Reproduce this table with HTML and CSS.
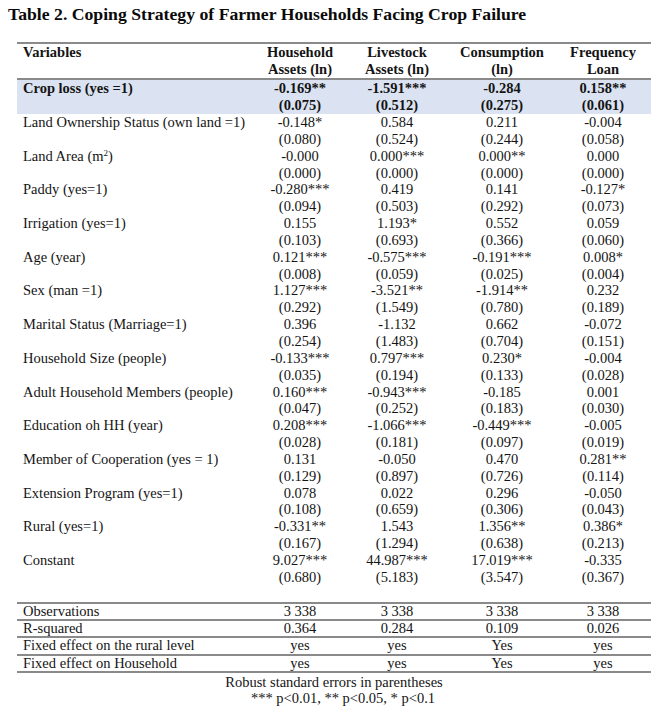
FILE: index.html
```html
<!DOCTYPE html>
<html>
<head>
<meta charset="utf-8">
<link rel="stylesheet" href="styles.css">
</head>
<body>
<div class="page">
  <h1 class="title">Table 2. Coping Strategy of Farmer Households Facing Crop Failure</h1>
  <table class="tbl">
    <colgroup>
      <col class="c0"><col class="c1"><col class="c2"><col class="c3"><col class="c4">
    </colgroup>
    <thead>
      <tr class="h1">
        <th class="var">Variables</th><th>Household</th><th>Livestock</th><th>Consumption</th><th>Frequency</th>
      </tr>
      <tr class="h2">
        <th class="var"></th><th>Assets (ln)</th><th>Assets (ln)</th><th>(ln)</th><th>Loan</th>
      </tr>
    </thead>
    <tbody>
      <tr class="hl"><td class="var">Crop loss (yes =1)</td><td>-0.169**</td><td>-1.591***</td><td>-0.284</td><td>0.158**</td></tr>
      <tr class="hl"><td class="var"></td><td>(0.075)</td><td>(0.512)</td><td>(0.275)</td><td>(0.061)</td></tr>

      <tr class="d"><td class="var">Land Ownership Status (own land =1)</td><td>-0.148*</td><td>0.584</td><td>0.211</td><td>-0.004</td></tr>
      <tr class="d"><td class="var"></td><td>(0.080)</td><td>(0.524)</td><td>(0.244)</td><td>(0.058)</td></tr>

      <tr class="d"><td class="var">Land Area (m<sup>2</sup>)</td><td>-0.000</td><td>0.000***</td><td>0.000**</td><td>0.000</td></tr>
      <tr class="d"><td class="var"></td><td>(0.000)</td><td>(0.000)</td><td>(0.000)</td><td>(0.000)</td></tr>

      <tr class="d"><td class="var">Paddy (yes=1)</td><td>-0.280***</td><td>0.419</td><td>0.141</td><td>-0.127*</td></tr>
      <tr class="d"><td class="var"></td><td>(0.094)</td><td>(0.503)</td><td>(0.292)</td><td>(0.073)</td></tr>

      <tr class="d"><td class="var">Irrigation (yes=1)</td><td>0.155</td><td>1.193*</td><td>0.552</td><td>0.059</td></tr>
      <tr class="d"><td class="var"></td><td>(0.103)</td><td>(0.693)</td><td>(0.366)</td><td>(0.060)</td></tr>

      <tr class="d"><td class="var">Age (year)</td><td>0.121***</td><td>-0.575***</td><td>-0.191***</td><td>0.008*</td></tr>
      <tr class="d"><td class="var"></td><td>(0.008)</td><td>(0.059)</td><td>(0.025)</td><td>(0.004)</td></tr>

      <tr class="d"><td class="var">Sex (man =1)</td><td>1.127***</td><td>-3.521**</td><td>-1.914**</td><td>0.232</td></tr>
      <tr class="d"><td class="var"></td><td>(0.292)</td><td>(1.549)</td><td>(0.780)</td><td>(0.189)</td></tr>

      <tr class="d"><td class="var">Marital Status (Marriage=1)</td><td>0.396</td><td>-1.132</td><td>0.662</td><td>-0.072</td></tr>
      <tr class="d"><td class="var"></td><td>(0.254)</td><td>(1.483)</td><td>(0.704)</td><td>(0.151)</td></tr>

      <tr class="d"><td class="var">Household Size (people)</td><td>-0.133***</td><td>0.797***</td><td>0.230*</td><td>-0.004</td></tr>
      <tr class="d"><td class="var"></td><td>(0.035)</td><td>(0.194)</td><td>(0.133)</td><td>(0.028)</td></tr>

      <tr class="d"><td class="var">Adult Household Members (people)</td><td>0.160***</td><td>-0.943***</td><td>-0.185</td><td>0.001</td></tr>
      <tr class="d"><td class="var"></td><td>(0.047)</td><td>(0.252)</td><td>(0.183)</td><td>(0.030)</td></tr>

      <tr class="d"><td class="var">Education oh HH (year)</td><td>0.208***</td><td>-1.066***</td><td>-0.449***</td><td>-0.005</td></tr>
      <tr class="d"><td class="var"></td><td>(0.028)</td><td>(0.181)</td><td>(0.097)</td><td>(0.019)</td></tr>

      <tr class="d"><td class="var">Member of Cooperation (yes = 1)</td><td>0.131</td><td>-0.050</td><td>0.470</td><td>0.281**</td></tr>
      <tr class="d"><td class="var"></td><td>(0.129)</td><td>(0.897)</td><td>(0.726)</td><td>(0.114)</td></tr>

      <tr class="d"><td class="var">Extension Program (yes=1)</td><td>0.078</td><td>0.022</td><td>0.296</td><td>-0.050</td></tr>
      <tr class="d"><td class="var"></td><td>(0.108)</td><td>(0.659)</td><td>(0.306)</td><td>(0.043)</td></tr>

      <tr class="d"><td class="var">Rural (yes=1)</td><td>-0.331**</td><td>1.543</td><td>1.356**</td><td>0.386*</td></tr>
      <tr class="d"><td class="var"></td><td>(0.167)</td><td>(1.294)</td><td>(0.638)</td><td>(0.213)</td></tr>

      <tr class="d"><td class="var">Constant</td><td>9.027***</td><td>44.987***</td><td>17.019***</td><td>-0.335</td></tr>
      <tr class="d"><td class="var"></td><td>(0.680)</td><td>(5.183)</td><td>(3.547)</td><td>(0.367)</td></tr>

      <tr class="gap"><td colspan="5"></td></tr>

      <tr class="st"><td class="var">Observations</td><td>3 338</td><td>3 338</td><td>3 338</td><td>3 338</td></tr>
      <tr class="st"><td class="var">R-squared</td><td>0.364</td><td>0.284</td><td>0.109</td><td>0.026</td></tr>
      <tr class="st"><td class="var">Fixed effect on the rural level</td><td>yes</td><td>yes</td><td>Yes</td><td>yes</td></tr>
      <tr class="st"><td class="var">Fixed effect on Household</td><td>yes</td><td>yes</td><td>Yes</td><td>yes</td></tr>
    </tbody>
  </table>
  <div class="notes">
    <p class="note n1">Robust standard errors in parentheses</p>
    <p class="note n2">*** p&lt;0.01, ** p&lt;0.05, * p&lt;0.1</p>
  </div>
</div>
</body>
</html>
```

FILE: styles.css
```css
html, body {
  margin: 0;
  padding: 0;
  background: #ffffff;
}

body {
  font-family: "Liberation Serif", "Times New Roman", serif;
  color: #141414;
}

.page {
  width: 672px;
  height: 712px;
  overflow: hidden;
}

.title {
  margin: 0;
  padding: 4px 0 0 8px;
  height: 42px;
  box-sizing: border-box;
  font-size: 17.7px;
  line-height: 20px;
  font-weight: bold;
  color: #0a0a0a;
}

.tbl {
  margin-left: 17px;
  width: 634px;
  border-collapse: collapse;
  table-layout: fixed;
  font-size: 14.5px;
}

.c0 { width: 238px; }
.c1 { width: 90px; }
.c2 { width: 104px; }
.c3 { width: 106px; }
.c4 { width: 96px; }

.tbl th,
.tbl td {
  padding: 0;
  height: 17px;
  line-height: 17px;
  text-align: center;
  white-space: nowrap;
  vertical-align: middle;
}

.tbl tr.d td {
  height: 16.85px;
  line-height: 16.85px;
}

.tbl th {
  font-weight: bold;
}

.tbl .var {
  text-align: left;
  padding-left: 6px;
}

.tbl thead tr.h1 th {
  border-top: 2px solid #8a8a8a;
}

.tbl thead tr.h2 th {
  border-bottom: 2px solid #8a8a8a;
}

.tbl tr.hl td {
  background: #dbe3f2;
  font-weight: bold;
}

sup {
  font-size: 9px;
  line-height: 0;
  vertical-align: 5px;
}

.tbl tr.gap td {
  height: 16px;
  line-height: 16px;
}

.tbl tr.st td {
  height: 15.3px;
  line-height: 15.3px;
  border-top: 2px solid #8a8a8a;
}

.tbl tr.st:last-child td {
  border-bottom: 2px solid #8a8a8a;
}

.notes {
  width: 634px;
  margin-left: 17px;
}

.note {
  margin: 0;
  font-size: 14.5px;
  line-height: 16px;
  text-align: center;
}

.n1 {
  padding-top: 1px;
}

.n2 {
  padding-left: 18px;
}
```
